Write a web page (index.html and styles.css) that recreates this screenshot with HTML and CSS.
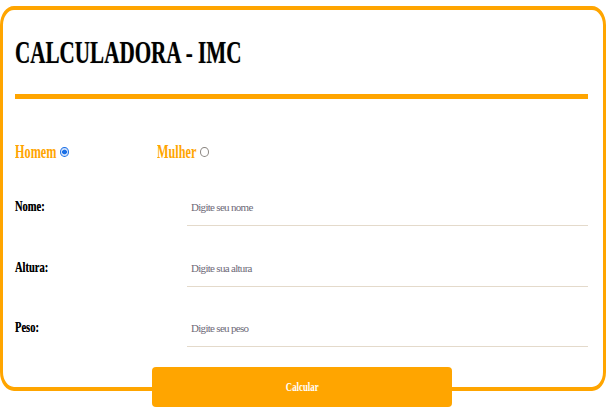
FILE: index.html
```html
<!DOCTYPE html>
<html lang="pt-BR">
<head>
<meta charset="utf-8">
<title>Calculadora - IMC</title>
<link rel="stylesheet" href="styles.css">
</head>
<body>
<div class="page">
  <form class="card">
    <h1 class="title"><span class="title-text">CALCULADORA - IMC</span></h1>
    <div class="rule"></div>
    <div class="genders">
      <label class="gender"><span class="gender-text gender-text--m">Homem</span><input class="radio" type="radio" name="sexo" checked></label>
      <label class="gender"><span class="gender-text gender-text--f">Mulher</span><input class="radio" type="radio" name="sexo"></label>
    </div>
    <div class="fields">
      <div class="field">
        <label class="field-label" for="nome"><span class="narrow">Nome:</span></label>
        <input class="field-input" id="nome" type="text" placeholder="Digite seu nome">
      </div>
      <div class="field">
        <label class="field-label" for="altura"><span class="narrow">Altura:</span></label>
        <input class="field-input" id="altura" type="text" placeholder="Digite sua altura">
      </div>
      <div class="field">
        <label class="field-label" for="peso"><span class="narrow">Peso:</span></label>
        <input class="field-input" id="peso" type="text" placeholder="Digite seu peso">
      </div>
    </div>
  </form>
  <div class="actions">
    <button class="btn" type="button"><span class="btn-text">Calcular</span></button>
  </div>
</div>
</body>
</html>
```
FILE: styles.css
```css
html, body {
  margin: 0;
  padding: 0;
  background: #ffffff;
}

body {
  font-family: "Liberation Serif", "Times New Roman", serif;
  color: #000000;
}

.page {
  width: 606px;
  padding-top: 6px;
}

.card {
  box-sizing: border-box;
  width: 100%;
  border-style: solid;
  border-color: #ffa500;
  border-width: 4px 3px;
  border-radius: 14px / 19px;
  padding: 0 15px 40px 12px;
  background: #ffffff;
}

.narrow {
  display: inline-block;
  transform: scaleX(0.7);
  transform-origin: 0 50%;
  text-shadow: 0 0 0.4px rgba(0, 0, 0, 0.6);
}

.title {
  margin: 26px 0 0;
  font-size: 32px;
  line-height: 32px;
  font-weight: 700;
  color: #000000;
}

.title-text {
  display: inline-block;
  transform: scaleX(0.66);
  transform-origin: 0 50%;
  text-shadow: 0 0 1px rgba(0, 0, 0, 0.4);
}

.rule {
  height: 5px;
  margin-top: 26px;
  background: #ffa500;
}

.genders {
  display: flex;
  margin-top: 43px;
  height: 20px;
}

.gender {
  display: flex;
  align-items: center;
  width: 142px;
  font-size: 18px;
  line-height: 20px;
  font-weight: 700;
  color: #ffa500;
}

.gender-text {
  display: inline-block;
  transform: scaleX(0.68);
  transform-origin: 0 50%;
}

.gender-text--m {
  margin-right: -19.5px;
}

.gender-text--f {
  margin-right: -19.5px;
}

.radio {
  appearance: none;
  -webkit-appearance: none;
  box-sizing: border-box;
  width: 9px;
  height: 10px;
  margin: 0 0 0 4px;
  border: 1px solid #8a8580;
  border-radius: 50%;
  background: #ffffff;
}

.radio:checked {
  border: 1.5px solid #1a6fe6;
  background: radial-gradient(circle, #1a6fe6 0 2.2px, #cfe0fb 2.6px 100%);
}

.fields {
  display: flex;
  flex-direction: column;
  gap: 29.5px;
  margin-top: 33px;
}

.field {
  display: flex;
  align-items: baseline;
}

.field-label {
  width: 172px;
  flex: none;
  font-size: 15px;
  font-weight: 700;
  color: #000000;
}

.field-input {
  box-sizing: border-box;
  width: 402px;
  height: 31px;
  padding: 0 4px 6px;
  border: none;
  border-bottom: 1px solid #e4dacb;
  outline: none;
  font-family: "Liberation Serif", "Times New Roman", serif;
  font-size: 11px;
  letter-spacing: -0.7px;
  color: #333333;
  background: transparent;
}

.field-input::placeholder {
  color: #6e6a78;
}

.actions {
  display: flex;
  justify-content: center;
  margin-top: -24px;
  position: relative;
}

.btn {
  width: 300px;
  height: 40px;
  margin-right: 2px;
  border: none;
  border-radius: 4px;
  background: #ffa500;
  color: #ffffff;
  font-family: "Liberation Serif", "Times New Roman", serif;
  font-size: 13px;
  font-weight: 700;
  cursor: pointer;
}

.btn-text {
  display: inline-block;
  transform: scaleX(0.68);
  transform-origin: 50% 50%;
}
```
